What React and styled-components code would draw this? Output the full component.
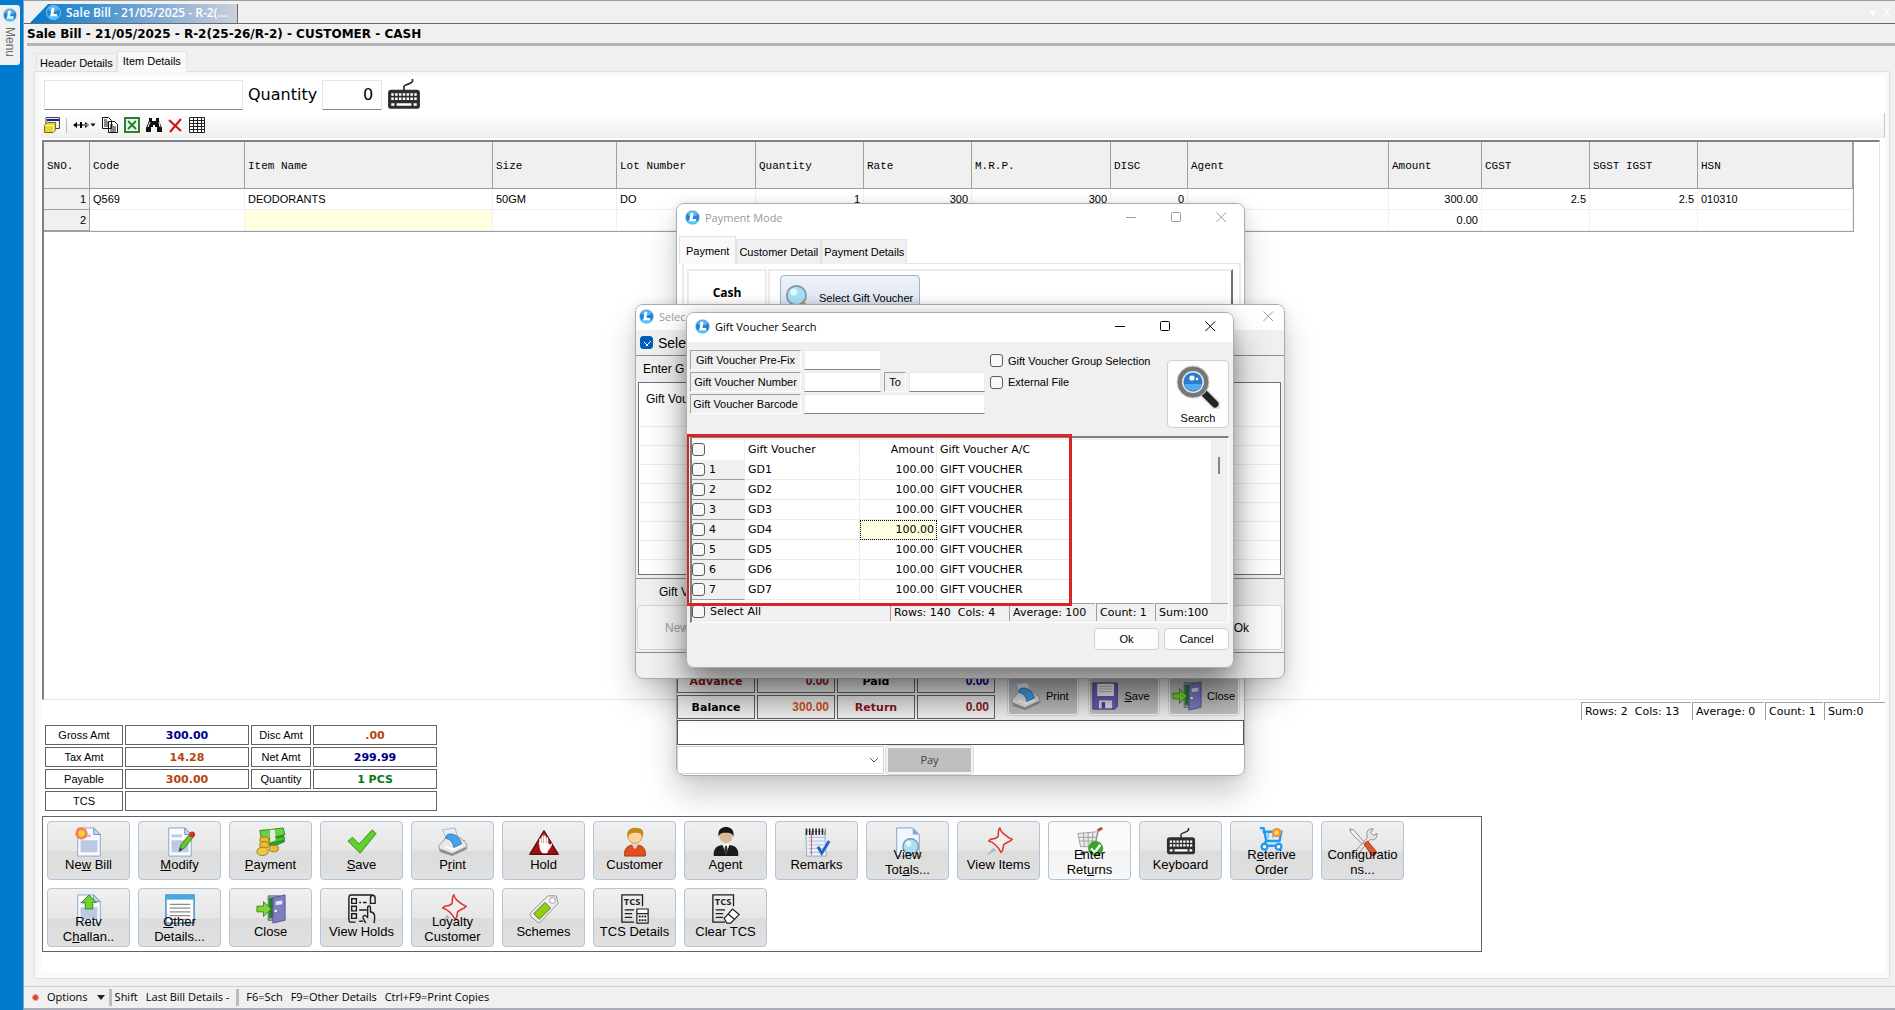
import React from "react";
import styled, { createGlobalStyle } from "styled-components";

const sans = '"Liberation Sans", Arial, sans-serif';
const ui = '"Open Sans", "Segoe UI", sans-serif';
const wide = '"DejaVu Sans", Verdana, sans-serif';
const mono = '"Liberation Mono", "Courier New", monospace';

const GlobalStyle = createGlobalStyle`
  *, *::before, *::after { box-sizing: border-box; }
  html, body { margin: 0; height: 100%; overflow: hidden; background: #f0f0f0; }
  body { font: 11px/14px ${sans}; color: #000; }
  button, input, select { font: inherit; color: inherit; margin: 0; padding: 0; border-radius: 0; }
  button { cursor: pointer; }
  svg { display: block; flex: none; }
  table { border-collapse: separate; border-spacing: 0; table-layout: fixed; }
`;

/* ---------- shell ---------- */

const Shell = styled.div`
  position: relative;
  display: flex;
  height: 100vh;
`;

const SideRail = styled.aside`
  flex: 0 0 24px;
  padding-top: 5px;
  background: #007acc;
  border-right: 1px solid #7f9fc4;
`;

const MenuTab = styled.button`
  display: flex;
  flex-direction: column;
  align-items: center;
  gap: 5px;
  width: 20px;
  height: 60px;
  padding-top: 3px;
  border: 0;
  border-radius: 0 3px 3px 0;
  background: #f0f0f0;
  color: #6d6d6d;
  font: 12px/14px ${sans};
  span { writing-mode: vertical-rl; }
`;

const Main = styled.div`
  flex: 1;
  min-width: 0;
  display: flex;
  flex-direction: column;
`;

const DocStrip = styled.div`
  flex: none;
  display: flex;
  align-items: flex-end;
  justify-content: space-between;
  height: 24px;
  padding: 0 5px 0 6px;
  border-top: 1px solid #a0a0a0;
  border-bottom: 1px solid #696969;
`;

const DocTab = styled.button`
  display: flex;
  align-items: center;
  gap: 5px;
  width: 208px;
  height: 19px;
  padding: 0 0 2px 16px;
  border: 0;
  border-right: 1px solid #696969;
  clip-path: polygon(0 100%, 18px 0, 100% 0, 100% 100%);
  background: linear-gradient(90deg, #007acc, #7fa9d3 60%, #cdd0dc);
  color: #fff;
  font: 600 12px/16px ${ui};
  white-space: nowrap;
`;

const DocActions = styled.div`
  display: flex;
  align-items: center;
  gap: 6px;
  height: 20px;
`;

const GhostButton = styled.button`
  border: 0;
  background: none;
  color: #fff;
  font: 12px/14px ${ui};
`;

const DocTitle = styled.h1`
  flex: none;
  margin: 0 0 0 3px;
  height: 22px;
  border-bottom: 3px solid #b4b4b4;
  font: bold 12px/20px ${wide};
  white-space: nowrap;
`;

const TabStrip = styled.div`
  flex: none;
  display: flex;
  align-items: flex-end;
  height: 25px;
  padding-left: 12px;
`;

const Tab = styled.button`
  height: ${(p) => (p.$active ? 21 : 18)}px;
  padding: ${(p) => (p.$active ? "0 5px 2px" : "0 3px")};
  margin-bottom: ${(p) => (p.$active ? -1 : 0)}px;
  z-index: ${(p) => (p.$active ? 1 : 0)};
  border: 1px solid #e3e3e3;
  border-bottom: 0;
  background: ${(p) => (p.$active ? "#f9f9f9" : "#f2f2f2")};
  font: 11px/16px ${sans};
  white-space: nowrap;
`;

const Page = styled.section`
  flex: 1;
  min-height: 0;
  display: flex;
  margin: 0 5px 7px 10px;
  padding: 4px 4px 5px 6px;
  border: 1px solid #e0e0e0;
  background: #f9f9f9;
`;

const Sheet = styled.div`
  flex: 1;
  min-width: 0;
  display: flex;
  flex-direction: column;
  padding-bottom: 21px;
  background: #fff;
`;

/* ---------- entry row and toolbar ---------- */

const EntryRow = styled.div`
  flex: none;
  display: flex;
  align-items: center;
  gap: 5px;
  height: 37px;
  padding: 0 3px;
  font: 16px/20px ${wide};
`;

const EntryInput = styled.input`
  width: ${(p) => p.$w}px;
  height: 30px;
  padding: 0 8px;
  border: 1px solid #e5e5e5;
  border-bottom-color: #868686;
  background: #fff;
  text-align: ${(p) => (p.$num ? "right" : "left")};
  outline: none;
`;

const Toolbar = styled.div`
  flex: none;
  display: flex;
  align-items: center;
  gap: 6px;
  height: 25px;
  margin-bottom: 2px;
  padding: 0 3px 1px;
  background: linear-gradient(#fff, #efefef);
  border-right: 1px solid #c8c8c8;
`;

const IconButton = styled.button`
  display: flex;
  align-items: center;
  border: 0;
  background: none;
`;

const Divider = styled.span`
  width: 1px;
  height: 15px;
  background: #bdbdbd;
`;

/* ---------- bill grid ---------- */

const GridBox = styled.div`
  flex: 1;
  min-height: 0;
  margin: 0 5px 2px 1px;
  overflow: hidden;
  border-style: solid;
  border-width: 2px 1px 1px 2px;
  border-color: #808080 #e3e3e3 #e3e3e3 #808080;
`;

const BillTable = styled.table`
  width: 1809px;
  border-right: 1px solid #a0a0a0;
  border-bottom: 1px solid #a0a0a0;
  font: 11px/20px ${sans};
  th {
    height: 47px;
    padding: 2px 3px 0;
    border-right: 1px solid #a0a0a0;
    border-bottom: 1px solid #a0a0a0;
    background: #f0f0f0;
    font: 11px/14px ${mono};
    text-align: left;
    white-space: nowrap;
  }
`;

const Cell = styled.td`
  height: 21px;
  padding: 0 3px;
  border-right: 1px solid ${(p) => (p.$head ? "#a0a0a0" : "#f0f0f0")};
  border-bottom: 1px solid ${(p) => (p.$head ? "#a0a0a0" : "#f0f0f0")};
  background: ${(p) => (p.$head ? "#f0f0f0" : p.$hot ? "#ffffe1" : "#fff")};
  text-align: ${(p) => (p.$num ? "right" : "left")};
  white-space: nowrap;
`;

const StatusCells = styled.div`
  flex: none;
  display: flex;
  justify-content: flex-end;
  gap: 1px;
  font: 11px/18px ${wide};
`;

const StatusCell = styled.span`
  width: ${(p) => p.$w}px;
  height: 18px;
  padding-left: 3px;
  border-top: 1px solid #a0a0a0;
  border-left: 1px solid #a0a0a0;
  white-space: pre;
`;

/* ---------- summary ---------- */

const Summary = styled.dl`
  flex: none;
  display: grid;
  grid-template-columns: 78px 124px 60px 124px;
  grid-auto-rows: 20px;
  gap: 2px;
  margin: 5px 0 5px 4px;
  text-align: center;
`;

const SumLabel = styled.dt`
  border: 1px solid #646464;
  line-height: 18px;
`;

const SumValue = styled.dd`
  grid-column: ${(p) => (p.$span ? "span 3" : "auto")};
  margin: 0;
  border: 1px solid #646464;
  color: ${(p) => p.$color};
  font: bold 11px/20px ${wide};
`;

/* ---------- action buttons ---------- */

const ActionPanel = styled.div`
  flex: none;
  display: grid;
  grid-template-columns: repeat(15, 83px);
  gap: 8px;
  width: 1440px;
  height: 136px;
  margin-left: 1px;
  padding: 4px;
  border: 1px solid #646464;
`;

const ActionButton = styled.button`
  display: grid;
  justify-items: center;
  height: 59px;
  padding-top: 5px;
  border: 1px solid #b0c4da;
  border-radius: 4px;
  background: ${(p) =>
    p.$hover
      ? "linear-gradient(#fafafa 50%, #f2f2f2 50%, #f7f8fa)"
      : "linear-gradient(#f0f0f0, #e6e6e6 50%, #dcdcdc 50%, #e0e0e0)"};
  font: 13px/15px ${sans};
  > * { grid-area: 1 / 1; }
`;

const ActionLabel = styled.span`
  align-self: end;
  display: flex;
  flex-direction: column;
  padding-bottom: ${(p) => (p.$lines > 1 ? 2 : 7)}px;
  white-space: nowrap;
`;

/* ---------- bottom bar ---------- */

const BottomBar = styled.footer`
  flex: none;
  display: flex;
  align-items: center;
  gap: 3px;
  height: 24px;
  padding: 0 8px 1px;
  border-top: 1px solid #d0d0d0;
  border-bottom: 2px solid #a8adb8;
  font: 11px/16px ${ui};
`;

const BarGroup = styled.div`
  display: flex;
  align-items: center;
  gap: 8px;
  padding-right: ${(p) => p.$r || 0}px;
  padding-left: ${(p) => p.$l || 0}px;
  white-space: pre;
`;

const BarDivider = styled.span`
  width: 3px;
  height: 17px;
  background: #bdbdbd;
`;

const RedDot = styled.span`
  width: 7px;
  height: 7px;
  border: 1px solid #f2a08e;
  border-radius: 50%;
  background: #d9432f;
`;

const OptionsButton = styled.button`
  display: flex;
  align-items: center;
  gap: 9px;
  border: 0;
  background: none;
`;

/* ---------- windows ---------- */

const Window = styled.section`
  position: absolute;
  left: ${(p) => p.$x}px;
  top: ${(p) => p.$y}px;
  width: ${(p) => p.$w}px;
  height: ${(p) => p.$h}px;
  display: flex;
  flex-direction: column;
  overflow: hidden;
  border: 1px solid #acacac;
  border-radius: 8px;
  background: ${(p) => p.$bg || "#f0f0f0"};
`;

const Shade = styled.div`
  position: absolute;
  left: ${(p) => p.$x}px;
  top: ${(p) => p.$y}px;
  width: ${(p) => p.$w}px;
  height: ${(p) => p.$h}px;
  border-radius: 8px;
  box-shadow: ${(p) =>
    p.$front
      ? "0 24px 36px rgba(0,0,0,.44), 0 0 14px rgba(0,0,0,.16)"
      : "0 18px 32px rgba(0,0,0,.2), 0 0 10px rgba(0,0,0,.1)"};
`;

const Caption = styled.header`
  flex: none;
  display: flex;
  align-items: center;
  gap: 5px;
  height: ${(p) => p.$h}px;
  padding: 0 ${(p) => p.$r || 17}px 2px ${(p) => p.$l || 8}px;
  background: #fff;
  color: ${(p) => (p.$off ? "#9a9a9a" : "#000")};
  h2 { flex: 1; margin: 0; font: 11px/16px ${ui}; }
`;

const CaptionButtons = styled.div`
  display: flex;
  gap: 34px;
`;

const PlainTabs = styled.div`
  flex: none;
  display: flex;
  align-items: flex-end;
  height: 31px;
  margin: 0 3px 0 2px;
  border-bottom: 1px solid #e3e3e3;
`;

const DialogTab = styled.button`
  height: ${(p) => (p.$active ? 28 : 25)}px;
  padding: ${(p) => (p.$active ? "0 6px" : "0 2px")};
  margin-bottom: -1px;
  border: 1px solid #e3e3e3;
  border-bottom: 0;
  background: ${(p) => (p.$active ? "#f9f9f9" : "#f0f0f0")};
  font: 11px/14px ${sans};
  white-space: nowrap;
`;

const PayBody = styled.div`
  flex: 1;
  display: flex;
  align-items: flex-start;
  gap: 1px;
  margin: 0 3px 0 5px;
  padding: 5px 6px 0 3px;
  border: solid #ececec;
  border-width: 0 2px 0 2px;
`;

const CashBox = styled.div`
  flex: 0 0 80px;
  height: 120px;
  padding-top: 14px;
  border: 2px solid #ececec;
  font: bold 12px/16px ${ui};
  text-align: center;
`;

const VoucherBox = styled.div`
  flex: 1;
  height: 120px;
  padding: 4px 0 0 10px;
  border: 2px solid #ececec;
  border-right: 2px solid #6f6f6f;
`;

const VoucherButton = styled.button`
  display: flex;
  align-items: center;
  gap: 6px;
  width: 140px;
  height: 45px;
  padding: 0 4px;
  border: 1px solid #9db4cc;
  border-radius: 4px;
  background: linear-gradient(#eef2f8, #d5dfec);
  font: 11px/14px ${sans};
`;

const PayFoot = styled.div`
  flex: none;
  display: flex;
  align-items: flex-end;
  gap: 12px;
  height: 62px;
  padding: 0 4px 1px 0;
  background: #f0f0f0;
`;

const PayTotals = styled.dl`
  display: grid;
  grid-template-columns: repeat(4, 78px);
  grid-auto-rows: 24px;
  gap: 2px;
  margin: 0;
`;

const PayTerm = styled.dt`
  border: 1px solid #646464;
  color: ${(p) => p.$color};
  font: bold 11px/24px ${wide};
  text-align: center;
`;

const PayValue = styled.dd`
  margin: 0;
  padding-right: 5px;
  border: 1px solid #646464;
  color: ${(p) => p.$color};
  font: bold 12px/22px ${sans};
  text-align: right;
`;

const PayButtons = styled.div`
  flex: 1;
  display: flex;
  justify-content: space-between;
  padding-bottom: 3px;
`;

const PayAction = styled.button`
  display: flex;
  align-items: center;
  gap: 5px;
  width: 72px;
  height: 46px;
  padding: 5px 2px 0;
  border: 2px solid #f4f4f4;
  outline: 1px solid #d5d5d5;
  outline-offset: -1px;
  border-radius: 4px;
  background: #c0c0c0;
  font: 11px/14px ${sans};
`;

const NoteInput = styled.input`
  flex: none;
  width: 100%;
  height: 25px;
  border: 1px solid #555;
  background: #fff;
`;

const PayRow = styled.div`
  flex: none;
  display: flex;
  align-items: flex-end;
  gap: 2px;
  height: 30px;
  padding-bottom: 1px;
`;

const SelectBox = styled.label`
  display: flex;
  align-items: center;
  width: 207px;
  height: 28px;
  border: 1px solid #d0d0d0;
  select {
    flex: 1;
    align-self: stretch;
    appearance: none;
    border: 0;
    background: transparent;
  }
  svg { margin-right: 4px; }
`;

const PayButton = styled.button`
  width: 87px;
  height: 28px;
  border: 2px solid #f3f3f3;
  outline: 1px solid #dcdcdc;
  border-radius: 3px;
  background: #bfbfbf;
  color: #444;
  font: 11px/16px ${ui};
`;

/* select gift voucher window */

const CheckLine = styled.label`
  display: flex;
  align-items: center;
  gap: 5px;
  height: ${(p) => p.$h}px;
  padding-left: ${(p) => p.$l || 0}px;
  font: ${(p) => p.$size || 11}px/16px ${sans};
  white-space: nowrap;
`;

const Check = styled.input.attrs({ type: "checkbox" })`
  appearance: none;
  flex: none;
  width: 13px;
  height: 13px;
  border: 1px solid #5c5c5c;
  border-radius: 3px;
  background: #f8f8f8;
  &:checked {
    border-color: #005fb8;
    background: #005fb8;
    background-image: linear-gradient(45deg, transparent 44%, #fff 44%, #fff 54%, transparent 54%),
      linear-gradient(-45deg, transparent 42%, #fff 42%, #fff 56%, transparent 56%);
    background-size: 4px 4px, 5px 5px;
    background-position: 3px 5px, 5px 4px;
    background-repeat: no-repeat;
  }
`;

const SectionBar = styled.div`
  height: ${(p) => p.$h}px;
  padding-left: ${(p) => p.$l}px;
  border-top: 1px solid #8c8c8c;
  font: 12px/${(p) => p.$h + 2}px ${sans};
`;

const VoucherList = styled.div`
  height: 193px;
  margin: 3px 3px 3px 2px;
  border: 1px solid #6f6f78;
  background: repeating-linear-gradient(#fff 0 18px, #ececec 18px 19px) 0 25px no-repeat #fff;
`;

const ListTitle = styled.div`
  height: 43px;
  padding: 8px 0 0 7px;
  background: #fff;
  font: 12px/16px ${sans};
`;

const BigButtons = styled.div`
  display: flex;
  gap: 2px;
  height: 50px;
  padding: 3px 2px 2px 1px;
`;

const BigButton = styled.button`
  flex: 1;
  padding: 0 32px 0 27px;
  border: 1px solid #d4d4d4;
  border-radius: 4px;
  background: #fcfcfc;
  font: 12px/16px ${sans};
  text-align: ${(p) => p.$align};
  &:disabled { background: #f5f5f5; color: #a0a0a0; }
`;

/* voucher search window */

const SearchForm = styled.div`
  display: grid;
  grid-template-columns: 111px 77px 22px 76px 1fr 62px;
  grid-template-rows: repeat(3, 20px) 15px;
  column-gap: 3px;
  row-gap: 2px;
  padding: 8px 4px 0 3px;
`;

const FieldLabel = styled.label`
  height: 20px;
  border-style: solid;
  border-width: 1px;
  border-color: #a0a0a0 #fff #fff #a0a0a0;
  line-height: 18px;
  text-align: center;
  white-space: nowrap;
`;

const Field = styled.input`
  grid-column: ${(p) => (p.$span ? "span " + p.$span : "auto")};
  width: 100%;
  height: 20px;
  border: 1px solid #ececec;
  border-bottom-color: #868686;
  background: #fff;
`;

const Options = styled.div`
  grid-area: 1 / 5 / 4 / 6;
  padding-left: 2px;
`;

const SearchButton = styled.button`
  grid-area: 1 / 6 / 5 / 7;
  display: flex;
  flex-direction: column;
  align-items: center;
  gap: 2px;
  height: 68px;
  margin-top: 10px;
  padding-top: 4px;
  border: 1px solid #cfcfcf;
  border-radius: 4px;
  background: #fdfdfd;
`;

const ResultBox = styled.div`
  position: relative;
  height: 187px;
  margin: 5px 4px 0 3px;
  border-style: solid;
  border-width: 2px 1px 1px 2px;
  border-color: #808080 #fff #fff #808080;
`;

const ResultBody = styled.div`
  display: flex;
  justify-content: space-between;
  height: 165px;
  padding-top: 2px;
  overflow: hidden;
`;

const ResultScroll = styled.div`
  flex: 1;
  background: #fff;
`;

const ScrollRail = styled.div`
  flex: 0 0 17px;
  padding: 17px 0 0 7px;
  background: #f0f0f0;
  &::before { content: ""; display: block; width: 2px; height: 17px; background: #858585; }
`;

const ResultTable = styled.table`
  width: 377px;
  font: 11px/19px ${wide};
  th { font-weight: 400; }
`;

const RCell = styled.td`
  height: 20px;
  padding: 0 2px 0 3px;
  border-right: ${(p) => (p.$last ? 0 : 1)}px solid #ececec;
  border-bottom: 1px solid ${(p) => (p.$top ? "#fff" : p.$head ? "#a0a0a0" : "#ececec")};
  background: ${(p) => (p.$hot ? "#ffffe1" : p.$head && !p.$top ? "#f0f0f0" : "#fff")};
  text-align: ${(p) => (p.$num ? "right" : "left")};
  outline: ${(p) => (p.$hot ? "1px dotted #000" : "none")};
  outline-offset: -1px;
  white-space: nowrap;
`;

const RowCheck = styled.label`
  display: flex;
  align-items: center;
  gap: 4px;
  height: 19px;
  margin-left: -3px;
`;

const ResultFoot = styled.div`
  display: flex;
  justify-content: space-between;
  height: 19px;
`;

const SelectAll = styled(CheckLine)`
  font-family: ${wide};
`;

const Highlight = styled.div`
  position: absolute;
  left: -6px;
  top: -4px;
  width: 386px;
  height: 172px;
  border: 3px solid #d8232a;
  pointer-events: none;
`;

const DialogButtons = styled.div`
  display: flex;
  justify-content: flex-end;
  gap: 5px;
  padding: 5px 4px 0;
`;

const DialogButton = styled.button`
  width: 65px;
  height: 22px;
  border: 1px solid #d0d0d0;
  border-radius: 4px;
  background: #fdfdfd;
`;

/* ---------- drawings ---------- */

const Svg = ({ s = 32, w, h, vb = "0 0 32 32", children }) => (
  <svg width={w || s} height={h || s} viewBox={vb} aria-hidden="true">{children}</svg>
);

const Logo = ({ s = 15 }) => (
  <Svg s={s}>
    <circle cx="16" cy="16" r="15" fill="#1b86d6" />
    <circle cx="16" cy="16" r="15" fill="none" stroke="#b9defa" strokeWidth="1.5" />
    <ellipse cx="16" cy="25" rx="10" ry="5" fill="#53c4fa" />
    <ellipse cx="16" cy="8" rx="11" ry="6" fill="#7cc0f2" opacity=".7" />
    <path d="M12 6h6l-2 13h8l-1 5H9z" fill="#fff" />
  </Svg>
);

const Min = () => <Svg s={11} vb="0 0 11 11"><path d="M0 5.5h10" stroke="currentColor" /></Svg>;
const Max = () => <Svg s={11} vb="0 0 11 11"><rect x=".5" y=".5" width="9" height="9" rx="1" fill="none" stroke="currentColor" /></Svg>;
const Close = () => <Svg s={11} vb="0 0 11 11"><path d="M.5.5l9.5 9.5M10 .5L.5 10" stroke="currentColor" /></Svg>;

const BlankPage = () => (
  <>
    <path d="M4 1h17l7 7v23H4z" fill="#f7faff" stroke="#8ba2c8" />
    <path d="M21 1v7h7z" fill="#c5d8f0" stroke="#6d93c6" />
    <path d="M7 8h11v3H7zM7 14h18v13H7z" fill="#bcc9e4" />
  </>
);

const Keyboard = () => (
  <>
    <path d="M16 12V8c0-2 7-2 8-5V1" fill="none" stroke="#2e2e2e" strokeWidth="1.6" />
    <rect x="1" y="11" width="30" height="18" rx="3" fill="#2e2e2e" />
    <path d="M4 15.500h24M4 19.500h24" stroke="#fff" strokeWidth="2.400" strokeDasharray="2.400 1.200" />
    <path d="M4 25h3M9 25h14M25 25h3" stroke="#fff" strokeWidth="2.400" />
  </>
);

const Printer = () => (
  <>
    <path d="M5 3l13-2 4 12H9z" fill="#e2f1fd" stroke="#9db9d2" />
    <path d="M1 20l7-8 15-1 7 6 1 6-16 7L2 26z" fill="#e8e8ea" stroke="#99999d" />
    <path d="M2 23l13 5 15-7v3l-15 7L3 27z" fill="#8f9094" />
    <path d="M10 8c7-2 13 2 15 10l-8 4c-1-6-4-9-9-10z" fill="#4ba3e6" stroke="#2c7cc0" />
    <path d="M8 21l8 3 9-4" fill="none" stroke="#fff" strokeWidth="2" />
    <circle cx="28" cy="15" r="1.200" fill="#f3a32d" />
  </>
);

const Door = () => (
  <>
    <path d="M13 2h13v26H13z" fill="#a9acb8" stroke="#5f6278" />
    <path d="M14 4h5v22h-5z" fill="#1c8128" />
    <path d="M18 4l13-3v27l-13 3z" fill="#7f7cc2" stroke="#55529a" />
    <path d="M21 8l7-1v4l-7 1z" fill="#dce6fb" />
    <circle cx="21" cy="18" r="1.300" fill="#fff" />
    <path d="M1 13h7V8l8 8-8 8v-5H1z" fill="#7fd438" stroke="#3c8c15" />
  </>
);

const Lens = () => (
  <>
    <path d="M19 20l9 9" stroke="#e69b2c" strokeWidth="4" strokeLinecap="round" />
    <circle cx="13" cy="13" r="11" fill="#a9e0f3" stroke="#7f97ad" strokeWidth="2" />
    <circle cx="10" cy="9" r="4" fill="#e3f8fd" />
  </>
);

const Pin = () => (
  <>
    <path d="M10 22L2 31l11-6z" fill="#b3bcc6" />
    <path d="M17 1c0 4 9 11 13 12-2 3-8 4-9 6-1 4 0 6-3 8-2-5-8-11-13-12 2-4 8-1 10-5 1-4-1-6 2-9z" fill="#f6f1f1" fillOpacity=".5" stroke="#d93a34" strokeWidth="1.700" strokeLinejoin="round" />
  </>
);

const Floppy = () => (
  <>
    <path d="M1 1h28v27l-3 3H1z" fill="#6a5cb2" stroke="#493b8c" />
    <path d="M6 2h19v14H6z" fill="#f4f4f4" />
    <path d="M8 5h15M8 8h15M8 11h15" stroke="#b8b8b8" />
    <path d="M8 21h15v9H8z" fill="#dcdde6" />
    <path d="M11 23h4v7h-4z" fill="#514299" />
  </>
);

const TcsSheet = ({ children }) => (
  <>
    <path d="M24 13V1H2v29h13" fill="none" stroke="#1d1d1d" strokeWidth="1.400" />
    <path d="M5 17h10M5 21h8M5 25h8" stroke="#1d1d1d" strokeWidth="1.300" />
    <text x="4" y="12" fontFamily="Open Sans, sans-serif" fontWeight="700" fontSize="10" fill="#1d1d1d">TCS</text>
    {children}
  </>
);

const art = {
  newBill: <><BlankPage /><circle cx="8" cy="7" r="6.500" fill="#ff6d3a" opacity=".85" /><circle cx="8" cy="7" r="3.500" fill="#ffd23a" /></>,
  modify: <><BlankPage /><path d="M15 26l2-7L26 8l4 3-9 11z" fill="#6cc62c" stroke="#37811a" /><circle cx="29" cy="8" r="3.200" fill="#d2322d" /><path d="M15 26l1-4 3 2z" fill="#333" /></>,
  payment: <>
    <path d="M5 3h24l2 13-9 4H9z" fill="#2ea32b" />
    <path d="M4 4l25-3 2 7-25 6z" fill="#6bd047" stroke="#2b8f25" />
    <path d="M10 14l20-4v4l-19 5z" fill="#4dbb38" stroke="#1d7a1b" strokeWidth=".7" />
    <path d="M15 3h5l1 11-6 2z" fill="#e6e9e2" />
    <ellipse cx="9" cy="14" rx="5" ry="3.500" fill="#e9bd37" stroke="#9a7310" />
    <ellipse cx="9" cy="19" rx="5" ry="3.500" fill="#e9bd37" stroke="#9a7310" />
    <ellipse cx="7" cy="26" rx="6" ry="4.500" fill="#f0c844" stroke="#9a7310" />
    <ellipse cx="19" cy="23" rx="5" ry="3.500" fill="#e9bd37" stroke="#9a7310" />
  </>,
  save: <path d="M1 15l5-4 7 7L27 3l4 4-17 21z" fill="#62d02c" stroke="#2e8f16" strokeLinejoin="round" />,
  print: <Printer />,
  hold: <>
    <path d="M16 4L31 29H1z" fill="#a8100c" stroke="#56100e" strokeLinejoin="round" strokeWidth="1.500" />
    <path d="M16 6l5 9-12 3z" fill="#d8645c" opacity=".7" />
    <path d="M12 18v-5M14.500 18v-8M17 18v-8M19.500 18v-6" fill="none" stroke="#fff" strokeWidth="2" strokeLinecap="round" />
    <path d="M11 17h9.500l2 2 2-2c1 1-2 6-4 8l-1 3h-5c-3-3-3.500-6-3.500-11z" fill="#fff" />
  </>,
  customer: <>
    <path d="M5 31c-1-8 3-12 11-12s12 4 11 12z" fill="#e1501c" stroke="#a8380d" />
    <path d="M12 17h8l-3 6h-2z" fill="#d5dbe0" />
    <circle cx="16" cy="10" r="7.500" fill="#ffd39b" stroke="#d9963c" />
    <path d="M8 11C6 2 14 0 18 1c7 0 8 5 6 10-1-4-3-5-7-5-5 0-7 1-9 5z" fill="#c28b18" />
  </>,
  agent: <>
    <path d="M3 31c-1-8 3-12 13-12s14 4 13 12z" fill="#1b1b1b" />
    <path d="M12 18h8l-4 11z" fill="#fff" /><path d="M15 20h2l1 6-2 3-2-3z" fill="#333" />
    <circle cx="16" cy="10" r="7" fill="#d6bb94" />
    <path d="M8 10C7 2 12 0 16 0s9 2 8 10c-2-4-4-4-8-4s-6 0-8 4z" fill="#161616" />
  </>,
  remarks: <>
    <path d="M4 5h20l2 26H5z" fill="#e9f0fc" stroke="#9ab" />
    <path d="M7 11h17M7 15h17M7 19h17M7 23h17M7 27h17" stroke="#a9bbdf" />
    <path d="M10 6v24" stroke="#e04a42" /><path d="M4 5h21" stroke="#222" strokeWidth="7" strokeDasharray="1.600 1.800" />
    <path d="M17 21l4 7 8-13" fill="none" stroke="#1e62c4" strokeWidth="3" />
  </>,
  totals: <><path d="M4 1h17l7 7v23H4z" fill="#f2f7ff" stroke="#7f9fcb" /><path d="M21 1v7h7z" fill="#7fa9da" /><g transform="translate(9 11) scale(.75)"><Lens /></g></>,
  pin: <Pin />,
  cart: <>
    <path d="M24 4l5-3" stroke="#c94343" strokeWidth="3" />
    <path d="M3 7l21-2-3 16H6zM4 11h19M5 15h17M9 6l1 15M14 6v15M19 6l-1 15" fill="#ededed" stroke="#9b9b9b" />
    <path d="M25 4l-5 22H6" fill="none" stroke="#8b8b8b" />
    <circle cx="8" cy="28" r="2" fill="#444" />
    <circle cx="22" cy="23" r="8" fill="#35a72b" /><path d="M17 23l4 4 6-8" fill="none" stroke="#fff" strokeWidth="2.600" />
  </>,
  keyboard: <Keyboard />,
  retrieve: <>
    <path d="M3 1h4l3 14h15M6 5h20l-2 10H9" fill="none" stroke="#1e9cf0" strokeWidth="2.600" />
    <path d="M12 6v6M17 6v6" stroke="#7ecbff" strokeWidth="2" />
    <path d="M10 15l-4 5h20" fill="none" stroke="#1e9cf0" strokeWidth="2.600" />
    <circle cx="8" cy="21" r="3" fill="#fff" stroke="#1e9cf0" strokeWidth="2.400" /><circle cx="23" cy="21" r="3" fill="#fff" stroke="#1e9cf0" strokeWidth="2.400" />
    <circle cx="21" cy="6" r="5" fill="#ff8a3a" /><circle cx="21" cy="6" r="2.500" fill="#ffe04a" />
  </>,
  config: <>
    <path d="M2 2l4 1 11 13-2 2L3 6z" fill="#f0f0f0" stroke="#888" />
    <path d="M4 30L21 11c-3-5 1-10 6-9l-3 4 3 3 4-2c0 6-4 8-7 6L8 32z" fill="#e6e6e6" stroke="#888" />
    <path d="M17 18l4-3 9 11c1 3-3 6-5 4z" fill="#dd5733" stroke="#9f3216" />
  </>,
  retv: <><BlankPage /><path d="M16 1l8 8h-4v7h-8V9H8z" fill="#6fd22f" stroke="#36861a" /></>,
  other: <>
    <rect x="1" y="1" width="30" height="30" fill="#fdfdfd" stroke="#3c8ac8" strokeWidth="1.500" />
    <rect x="1" y="1" width="30" height="5" fill="#49a7e2" />
    <path d="M5 11h22M5 15h22M5 19h22M5 23h22M5 27h22" stroke="#8c8c8c" strokeWidth="1.200" />
  </>,
  door: <Door />,
  holds: <>
    <path d="M25 11V5c0-5 5-5 5 0v5h-5M27 1H4C2 1 2 3 2 5v22c0 3 1 3 4 3h3" fill="none" stroke="#1d1d1d" strokeWidth="1.500" />
    <path d="M5 5h5v5H5zM5 13h5v5H5zM5 21h5v5H5zM13 9h2M17 9h4M13 17h8M13 29h4" fill="none" stroke="#1d1d1d" strokeWidth="1.500" />
    <path d="M20 31c-3-5-4-7-2-8s3 2 4 2V15c0-3 3-3 3 0v4c5 1 5 4 4 12" fill="none" stroke="#1d1d1d" strokeWidth="1.500" />
  </>,
  tag: <>
    <path d="M2 20L20 2l9 0 2 8-18 19c-2 2-3 2-5 0l-6-5c-1-2-1-3 0-4z" fill="#ededed" stroke="#8d8d8d" />
    <path d="M5 21L17 9l6 6-12 12z" fill="#8fce12" stroke="#4d7d0a" />
    <circle cx="25" cy="7" r="3" fill="#fff" stroke="#999" />
  </>,
  tcsDetails: <TcsSheet><path d="M18 16h12v15H18zM18 21h12" fill="#fff" stroke="#1d1d1d" strokeWidth="1.300" /><path d="M20 24h8M20 28h8" stroke="#1d1d1d" strokeWidth="2" strokeDasharray="2 1" /></TcsSheet>,
  tcsClear: <TcsSheet><path d="M14 26l9-10 7 6-9 9h-4zM18 21l7 6" fill="#fff" stroke="#1d1d1d" strokeWidth="1.300" /></TcsSheet>,
};

/* ---------- data ---------- */

const columns = [
  ["SNO.", 46], ["Code", 155], ["Item Name", 248], ["Size", 124], ["Lot Number", 139],
  ["Quantity", 108], ["Rate", 108], ["M.R.P.", 139], ["DISC", 77], ["Agent", 201],
  ["Amount", 93], ["CGST", 108], ["SGST IGST", 108], ["HSN", 155],
];
const numeric = [0, 5, 6, 7, 8, 10, 11, 12];
const rows = [
  ["1", "Q569", "DEODORANTS", "50GM", "DO", "1", "300", "300", "0", "", "300.00", "2.5", "2.5", "010310"],
  ["2", "", "", "", "", "", "", "", "", "", "0.00", "", "", ""],
];

/* "_" marks the access key of a label, "|" a line break */
const actions = [
  ["newBill", "Ne_w Bill"], ["modify", "_Modify"], ["payment", "_Payment"], ["save", "_Save"],
  ["print", "P_rint"], ["hold", "Hold"], ["customer", "Customer"], ["agent", "Agent"],
  ["remarks", "Remarks"], ["totals", "View|Tot_als..."], ["pin", "View Items"],
  ["cart", "Enter|Ret_urns"], ["keyboard", "Keyboard"], ["retrieve", "R_eterive|Order"],
  ["config", "Confi_guratio|ns..."], ["retv", "Retv|C_hallan.."], ["other", "_Other|Details..."],
  ["door", "Close"], ["holds", "View Holds"], ["pin", "Loyalty|Customer"], ["tag", "Schemes"],
  ["tcsDetails", "TCS Details"], ["tcsClear", "Clear TCS"],
];

const KeyText = ({ text }) => {
  const i = text.indexOf("_");
  if (i < 0) return <span>{text}</span>;
  return <span>{text.slice(0, i)}<u>{text[i + 1]}</u>{text.slice(i + 2)}</span>;
};

const blue = "#00008b";
const rust = "#b5450f";
const maroon = "#8b1a1a";

const WindowButtons = ({ only }) => (
  <CaptionButtons>
    {!only && <IconButton aria-label="Minimize"><Min /></IconButton>}
    {!only && <IconButton aria-label="Maximize"><Max /></IconButton>}
    <IconButton aria-label="Close window"><Close /></IconButton>
  </CaptionButtons>
);

const PaymentWindow = () => (
  <>
    <Shade $x={676} $y={203} $w={569} $h={573} />
    <Window $x={676} $y={203} $w={569} $h={573} $bg="#fff" aria-label="Payment Mode">
      <Caption $h={29} $off><Logo /><h2>Payment Mode</h2><WindowButtons /></Caption>
      <PlainTabs>
        <DialogTab $active>Payment</DialogTab>
        <DialogTab>Customer Detail</DialogTab>
        <DialogTab>Payment Details</DialogTab>
      </PlainTabs>
      <PayBody>
        <CashBox>Cash</CashBox>
        <VoucherBox>
          <VoucherButton><Svg s={28}><Lens /></Svg>Select Gift Voucher</VoucherButton>
        </VoucherBox>
      </PayBody>
      <PayFoot>
        <PayTotals>
          <PayTerm $color={maroon}>Advance</PayTerm><PayValue $color={maroon}>0.00</PayValue>
          <PayTerm>Paid</PayTerm><PayValue $color={blue}>0.00</PayValue>
          <PayTerm>Balance</PayTerm><PayValue $color="#d2541e">300.00</PayValue>
          <PayTerm $color={maroon}>Return</PayTerm><PayValue $color={maroon}>0.00</PayValue>
        </PayTotals>
        <PayButtons>
          <PayAction><Svg s={30}><Printer /></Svg>Print</PayAction>
          <PayAction><Svg s={28}><Floppy /></Svg><KeyText text="_Save" /></PayAction>
          <PayAction><Svg s={30}><Door /></Svg>Close</PayAction>
        </PayButtons>
      </PayFoot>
      <NoteInput aria-label="Note" />
      <PayRow>
        <SelectBox>
          <select aria-label="Payment terminal"><option></option></select>
          <Svg s={10} vb="0 0 10 10"><path d="M1 3l4 4 4-4" fill="none" stroke="#555" /></Svg>
        </SelectBox>
        <PayButton>Pay</PayButton>
      </PayRow>
    </Window>
  </>
);

const SelectWindow = () => (
  <>
    <Shade $x={635} $y={304} $w={650} $h={375} />
    <Window $x={635} $y={304} $w={650} $h={375} aria-label="Select Gift Voucher">
      <Caption $h={25} $l={3} $r={10} $off><Logo /><h2>Selec</h2><WindowButtons only /></Caption>
      <CheckLine $h={25} $l={4} $size={14}><Check defaultChecked />Sele</CheckLine>
      <SectionBar $h={24} $l={7}>Enter G</SectionBar>
      <VoucherList><ListTitle>Gift Vou</ListTitle></VoucherList>
      <SectionBar $h={24} $l={23}>Gift V</SectionBar>
      <BigButtons>
        <BigButton $align="left" disabled>New</BigButton>
        <BigButton $align="right">Ok</BigButton>
      </BigButtons>
      <SectionBar $h={26} $l={0} />
    </Window>
  </>
);

const SearchWindow = () => (
  <>
    <Shade $x={686} $y={312} $w={548} $h={356} $front />
    <Window $x={686} $y={312} $w={548} $h={356} aria-label="Gift Voucher Search">
      <Caption $h={29}><Logo /><h2>Gift Voucher Search</h2><WindowButtons /></Caption>
      <SearchForm>
        <FieldLabel htmlFor="prefix">Gift Voucher Pre-Fix</FieldLabel>
        <Field id="prefix" />
        <span /><span />
        <FieldLabel htmlFor="from">Gift Voucher Number</FieldLabel>
        <Field id="from" />
        <FieldLabel htmlFor="to">To</FieldLabel>
        <Field id="to" />
        <FieldLabel htmlFor="barcode">Gift Voucher Barcode</FieldLabel>
        <Field id="barcode" $span={3} />
        <Options>
          <CheckLine $h={21}><Check />Gift Voucher Group Selection</CheckLine>
          <CheckLine $h={22}><Check />External File</CheckLine>
        </Options>
        <SearchButton>
          <Svg s={44} vb="0 0 44 44">
            <path d="M26 26l14 14" stroke="#ddd" strokeWidth="10" strokeLinecap="round" />
            <path d="M26 26l13 13" stroke="#222" strokeWidth="7" strokeLinecap="round" />
            <circle cx="17" cy="17" r="16" fill="#777" stroke="#ccc" />
            <circle cx="17" cy="17" r="11" fill="#dfe9f2" />
            <circle cx="17" cy="17" r="9.500" fill="#2a7ccc" />
            <path d="M8 19a9.500 9.500 0 0 0 18 0z" fill="#57a9f2" />
            <circle cx="16" cy="13" r="2.600" fill="#fff" /><circle cx="21" cy="14" r="1.300" fill="#fff" />
          </Svg>
          Search
        </SearchButton>
      </SearchForm>
      <ResultBox>
        <ResultBody>
          <ResultScroll>
            <ResultTable>
              <colgroup><col width="53" /><col width="115" /><col width="77" /><col width="132" /></colgroup>
              <thead>
                <tr>
                  <RCell as="th" $head $top><RowCheck><Check aria-label="All rows" /></RowCheck></RCell>
                  <RCell as="th" $top>Gift Voucher</RCell>
                  <RCell as="th" $top $num>Amount</RCell>
                  <RCell as="th" $top $last>Gift Voucher A/C</RCell>
                </tr>
              </thead>
              <tbody>
                {[1, 2, 3, 4, 5, 6, 7].map((n) => (
                  <tr key={n}>
                    <RCell $head><RowCheck><Check />{n}</RowCheck></RCell>
                    <RCell>GD{n}</RCell>
                    <RCell $num $hot={n === 4}>100.00</RCell>
                    <RCell $last>GIFT VOUCHER</RCell>
                  </tr>
                ))}
              </tbody>
            </ResultTable>
          </ResultScroll>
          <ScrollRail />
        </ResultBody>
        <ResultFoot>
          <SelectAll $h={17}><Check />Select All</SelectAll>
          <StatusCells>
            <StatusCell $w={118}>Rows: 140  Cols: 4</StatusCell>
            <StatusCell $w={86}>Average: 100</StatusCell>
            <StatusCell $w={58}>Count: 1</StatusCell>
            <StatusCell $w={73}>Sum:100</StatusCell>
          </StatusCells>
        </ResultFoot>
        <Highlight />
      </ResultBox>
      <DialogButtons>
        <DialogButton>Ok</DialogButton>
        <DialogButton>Cancel</DialogButton>
      </DialogButtons>
    </Window>
  </>
);

export default function App() {
  return (
    <Shell>
      <GlobalStyle />
      <SideRail><MenuTab><Logo s={14} /><span>Menu</span></MenuTab></SideRail>
      <Main>
        <DocStrip>
          <DocTab><Logo s={15} />Sale Bill - 21/05/2025 - R-2(...</DocTab>
          <DocActions>
            <IconButton aria-label="Open documents"><Svg s={8} vb="0 0 8 8"><path d="M0 2h8L4 7z" fill="#fff" /></Svg></IconButton>
            <GhostButton>X</GhostButton>
          </DocActions>
        </DocStrip>
        <DocTitle>Sale Bill - 21/05/2025 - R-2(25-26/R-2) - CUSTOMER - CASH</DocTitle>
        <TabStrip>
          <Tab>Header Details</Tab>
          <Tab $active>Item Details</Tab>
        </TabStrip>
        <Page>
          <Sheet>
            <EntryRow>
              <EntryInput $w={199} aria-label="Item code" />
              <label htmlFor="qty">Quantity</label>
              <EntryInput id="qty" $w={60} $num defaultValue="0" />
              <Svg s={34}><Keyboard /></Svg>
            </EntryRow>
            <Toolbar>
              <IconButton aria-label="Card view">
                <Svg s={16} vb="0 0 16 16">
                  <path d="M2 .5h13.500v11H2z" fill="#eee" stroke="#444" /><path d="M3 2h12v2H3z" fill="#1a1aa8" />
                  <path d="M.5 8l3-2.500h8v7l-2 3h-9z" fill="#e3d53a" stroke="#77700e" /><path d="M.5 8.500h9v7" fill="none" stroke="#fff7a0" />
                </Svg>
              </IconButton>
              <Divider />
              <IconButton aria-label="Column width">
                <Svg w={23} h={10} vb="0 0 23 10">
                  <path d="M0 5l4-3v6zM16 5l-4-3v6zM1 4.500h14v1H1zM7 2h2v6H7zM17.500 3.500h5L20 6.500z" />
                </Svg>
              </IconButton>
              <IconButton aria-label="Copy">
                <Svg s={16} vb="0 0 16 16">
                  <path d="M.5.5h6l3 3v8h-9zM6.500 4.500h6l3 3v8h-9z" fill="#fff" stroke="#111" />
                  <path d="M2 3h3M2 5h4M2 7h4M2 9h4M8 8h3M8 10h6M8 12h6M8 14h6" stroke="#111" />
                </Svg>
              </IconButton>
              <IconButton aria-label="Export to Excel">
                <Svg s={16} vb="0 0 16 16">
                  <rect x="1" y="1" width="14" height="14" fill="#eaf4ea" stroke="#2f7d32" strokeWidth="2" />
                  <path d="M4 4l8 8M12 4l-8 8" stroke="#2f7d32" strokeWidth="2" />
                </Svg>
              </IconButton>
              <IconButton aria-label="Find">
                <Svg s={16} vb="0 0 16 16">
                  <path d="M3 1h3v3h4V1h3v3l3 7v4h-5v-5H9V8H7v2H5v5H0v-4l3-7z" fill="#111" />
                  <path d="M2 10l2-5M13 5l1 5" stroke="#fff" />
                </Svg>
              </IconButton>
              <IconButton aria-label="Delete">
                <Svg s={15} vb="0 0 15 15"><path d="M1 2l12 11M13 1L2 14" stroke="#cc1414" strokeWidth="2" /></Svg>
              </IconButton>
              <IconButton aria-label="Grid lines">
                <Svg s={16} vb="0 0 16 16"><path d="M.5.5h15v15H.5zM.5 3.500h15M.5 6.500h15M.5 9.500h15M.5 12.500h15M4.500.5v15M8.500.5v15M12.500.5v15" fill="#fff" stroke="#222" /></Svg>
              </IconButton>
            </Toolbar>
            <GridBox>
              <BillTable>
                <colgroup>{columns.map(([name, w]) => <col key={name} width={w} />)}</colgroup>
                <thead><tr>{columns.map(([name]) => <th key={name}>{name}</th>)}</tr></thead>
                <tbody>
                  {rows.map((r, ri) => (
                    <tr key={ri}>
                      {r.map((c, i) => (
                        <Cell key={i} $head={i === 0} $num={numeric.includes(i)} $hot={ri === 1 && i === 2}>{c}</Cell>
                      ))}
                    </tr>
                  ))}
                </tbody>
              </BillTable>
            </GridBox>
            <StatusCells>
              <StatusCell $w={110}>Rows: 2  Cols: 13</StatusCell>
              <StatusCell $w={72}>Average: 0</StatusCell>
              <StatusCell $w={58}>Count: 1</StatusCell>
              <StatusCell $w={61}>Sum:0</StatusCell>
            </StatusCells>
            <Summary>
              <SumLabel>Gross Amt</SumLabel><SumValue $color={blue}>300.00</SumValue>
              <SumLabel>Disc Amt</SumLabel><SumValue $color={rust}>.00</SumValue>
              <SumLabel>Tax Amt</SumLabel><SumValue $color={rust}>14.28</SumValue>
              <SumLabel>Net Amt</SumLabel><SumValue $color={blue}>299.99</SumValue>
              <SumLabel>Payable</SumLabel><SumValue $color={rust}>300.00</SumValue>
              <SumLabel>Quantity</SumLabel><SumValue $color="#0a7a14">1 PCS</SumValue>
              <SumLabel>TCS</SumLabel><SumValue $span />
            </Summary>
            <ActionPanel>
              {actions.map(([icon, text]) => {
                const lines = text.split("|");
                return (
                  <ActionButton key={text} $hover={icon === "cart"}>
                    <Svg s={30}>{art[icon]}</Svg>
                    <ActionLabel $lines={lines.length}>{lines.map((t) => <KeyText key={t} text={t} />)}</ActionLabel>
                  </ActionButton>
                );
              })}
            </ActionPanel>
          </Sheet>
        </Page>
        <BottomBar>
          <BarGroup $r={1}>
            <RedDot />
            <OptionsButton>Options<Svg s={8} vb="0 0 8 8"><path d="M0 2h8L4 7z" fill="#222" /></Svg></OptionsButton>
          </BarGroup>
          <BarDivider />
          <BarGroup $r={4}>
            <span>Shift</span>
            <span>Last Bill Details -</span>
          </BarGroup>
          <BarDivider />
          <BarGroup $l={4}>
            <span>F6=Sch</span>
            <span>F9=Other Details</span>
            <span>Ctrl+F9=Print Copies</span>
          </BarGroup>
        </BottomBar>
      </Main>
      <PaymentWindow />
      <SelectWindow />
      <SearchWindow />
    </Shell>
  );
}
